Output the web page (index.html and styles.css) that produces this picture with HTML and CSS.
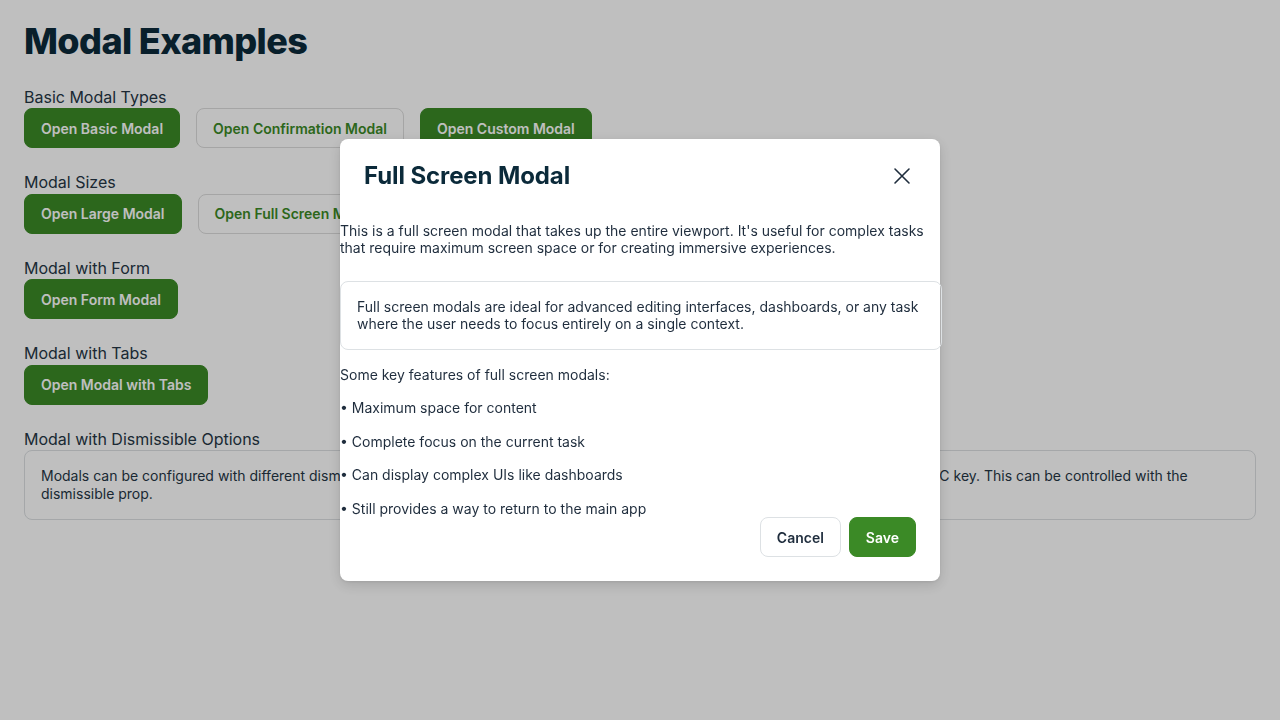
FILE: index.html
```html
<!DOCTYPE html>
<html lang="en">
<head>
<meta charset="utf-8">
<title>Modal Examples</title>
<link rel="stylesheet" href="styles.css">
</head>
<body>
<main class="page">
  <h1 class="page-title">Modal Examples</h1>

  <section class="section">
    <div class="section-label">Basic Modal Types</div>
    <div class="btn-row">
      <button class="btn btn-primary">Open Basic Modal</button>
      <button class="btn btn-outline">Open Confirmation Modal</button>
      <button class="btn btn-primary">Open Custom Modal</button>
    </div>
  </section>

  <section class="section">
    <div class="section-label">Modal Sizes</div>
    <div class="btn-row">
      <button class="btn btn-primary">Open Large Modal</button>
      <button class="btn btn-outline">Open Full Screen Modal</button>
    </div>
  </section>

  <section class="section">
    <div class="section-label">Modal with Form</div>
    <div class="btn-row">
      <button class="btn btn-primary">Open Form Modal</button>
    </div>
  </section>

  <section class="section">
    <div class="section-label">Modal with Tabs</div>
    <div class="btn-row">
      <button class="btn btn-primary">Open Modal with Tabs</button>
    </div>
  </section>

  <section class="section">
    <div class="section-label">Modal with Dismissible Options</div>
    <div class="info-box">Modals can be configured with different dismissible options. By default, modals can be closed by clicking the overlay or pressing the ESC key. This can be controlled with the dismissible prop.</div>
  </section>
</main>

<div class="overlay">
  <div class="modal" role="dialog" aria-label="Full Screen Modal">
    <div class="modal-header">
      <h2 class="modal-title">Full Screen Modal</h2>
      <button class="modal-close" aria-label="Close">
        <svg width="24" height="24" viewBox="0 0 24 24" fill="none" stroke="currentColor" stroke-width="1.6" stroke-linecap="round"><path d="M5 5L19 19M19 5L5 19"/></svg>
      </button>
    </div>
    <div class="modal-body">
      <p>This is a full screen modal that takes up the entire viewport. It's useful for complex tasks that require maximum screen space or for creating immersive experiences.</p>
      <div class="modal-note">Full screen modals are ideal for advanced editing interfaces, dashboards, or any task where the user needs to focus entirely on a single context.</div>
      <p>Some key features of full screen modals:</p>
      <p>• Maximum space for content</p>
      <p>• Complete focus on the current task</p>
      <p>• Can display complex UIs like dashboards</p>
      <p class="last">• Still provides a way to return to the main app</p>
    </div>
    <div class="modal-footer">
      <button class="btn btn-secondary">Cancel</button>
      <button class="btn btn-primary">Save</button>
    </div>
  </div>
</div>
</body>
</html>
```

FILE: styles.css
```css
* { box-sizing: border-box; }

html, body {
  margin: 0;
  padding: 0;
  background: #ffffff;
  font-family: Inter, "Noto Sans", sans-serif;
  color: #1f2d3d;
}

.page {
  padding: 20px 24px;
}

.page-title {
  margin: 0 0 23.5px;
  font-size: 36px;
  line-height: 43px;
  font-weight: 800;
  letter-spacing: -0.6px;
  color: #0b2a3a;
}

.section {
  margin-bottom: 24px;
}

.section-label {
  font-size: 16px;
  line-height: 21.5px;
  color: #253645;
}

.btn-row {
  display: flex;
  gap: 16px;
}

.btn {
  height: 40px;
  padding: 0 16px;
  border-radius: 8px;
  font-family: Inter, "Noto Sans", sans-serif;
  font-size: 14px;
  font-weight: 600;
  border: 1px solid transparent;
  cursor: pointer;
}

.btn-primary {
  background: #3b8a26;
  border-color: #3b8a26;
  color: #ffffff;
}

.btn-outline {
  background: #ffffff;
  border-color: #dcdcdc;
  color: #3b8a26;
}

.btn-secondary {
  background: #ffffff;
  border-color: #dde1e4;
  color: #1f2d3d;
}

.info-box {
  border: 1px solid #dcdfe2;
  border-radius: 8px;
  padding: 16px;
  font-size: 14px;
  line-height: 18px;
  color: #253645;
}

/* Overlay + modal */
.overlay {
  position: fixed;
  inset: 0;
  background: rgba(0, 0, 0, 0.25);
  display: flex;
  align-items: center;
  justify-content: center;
}

.modal {
  width: 600px;
  background: #ffffff;
  border-radius: 8px;
  box-shadow: 0 4px 14px rgba(0, 0, 0, 0.14), 0 1px 3px rgba(0, 0, 0, 0.08);
}

.modal-header {
  display: flex;
  align-items: center;
  justify-content: space-between;
  padding: 23px 26px 25px 24px;
}

.modal-title {
  margin: 0;
  font-size: 24px;
  line-height: 28px;
  font-weight: 700;
  color: #0b2a3a;
  letter-spacing: -0.1px;
}

.modal-close {
  width: 24px;
  height: 24px;
  padding: 0;
  border: 0;
  background: transparent;
  color: #1f2d3d;
  display: flex;
  align-items: center;
  justify-content: center;
  cursor: pointer;
}

.modal-body {
  padding-top: 6.5px;
  font-size: 14px;
  line-height: 17.5px;
  color: #1f2d3d;
}

.modal-body p {
  margin: 0 0 16px;
}

.modal-body p.last {
  margin-bottom: 0;
}

.modal-note {
  width: calc(100% + 2px);
  margin: 24px 0 16px;
  padding: 16px;
  border: 1px solid #dde1e4;
  border-radius: 8px;
  line-height: 17.5px;
}

.modal-footer {
  display: flex;
  justify-content: flex-end;
  gap: 8px;
  padding: 0 24px 24px;
}
```
